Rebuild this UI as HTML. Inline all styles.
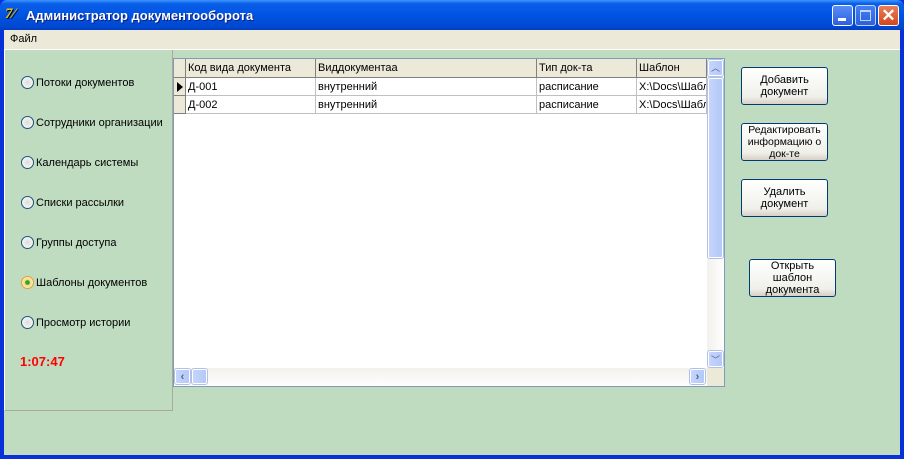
<!DOCTYPE html>
<html><head><meta charset="utf-8"><style>
*{margin:0;padding:0;box-sizing:border-box}
body{width:904px;height:459px;overflow:hidden;background:#0831d9;font-family:Tahoma,"Liberation Sans",sans-serif;font-size:11px;position:relative}
.a{position:absolute}
.title{left:0;top:0;width:904px;height:30px;background:linear-gradient(#3d95ff 0%,#0a5fe8 12%,#0054e3 50%,#0048d0 90%,#003cc0);border-radius:7px 7px 0 0}
.ttext{left:26px;top:8px;color:#fff;font-weight:bold;font-size:13px;text-shadow:1px 1px #0a1e7a}
.menu{left:4px;top:30px;width:896px;height:19px;background:#ece9d8}
.client{left:4px;top:49px;width:896px;height:406px;background:#c0dcc0}
.wb{width:21px;height:21px;top:5px;border:1px solid #fff;border-radius:3px}
.radio{width:13px;height:13px;border-radius:50%;border:1px solid #1c5180;background:radial-gradient(#dcdcd6,#fff);}
.rl{left:36px;color:#000}
.btn{border:1px solid #003c74;border-radius:3px;background:linear-gradient(#fff,#f0f0ea 80%,#d6d0c5);text-align:center;line-height:12px;color:#000;display:flex;align-items:center;justify-content:center}
.hd{top:59px;height:19px;background:#ece9d8;border-right:1px solid #808080;border-bottom:1px solid #808080;padding-left:2px;line-height:18px}
.c{height:18px;border-right:1px solid #c0c0c0;border-bottom:1px solid #c0c0c0;padding-left:2px;line-height:18px;background:#fff;overflow:hidden;white-space:nowrap}
.sb{background:linear-gradient(90deg,#c5d5fc,#b4c8f8);border:1px solid #fff;outline:1px solid #b0c0e8;border-radius:2px}
</style></head><body>
<div class="a title"></div>
<div class="a" style="left:5px;top:6px;width:18px;height:18px;color:#f0c000;font-weight:bold;font-style:italic;font-size:15px;font-family:'Liberation Serif',serif;text-shadow:1px 1px #000">7⁄</div>
<div class="a ttext">Администратор документооборота</div>
<div class="a wb" style="left:832px;background:linear-gradient(#5b8df7,#2c5fe0)"><div class="a" style="left:5px;top:12px;width:8px;height:3px;background:#fff"></div></div>
<div class="a wb" style="left:855px;background:linear-gradient(#5b8df7,#3a68e0);opacity:.75"><div class="a" style="left:4px;top:4px;width:11px;height:11px;border:1px solid #fff;border-top-width:2px"></div></div>
<div class="a wb" style="left:878px;background:linear-gradient(#e8805a,#d3461c);color:#fff;font-size:17px;font-weight:bold;text-align:center;line-height:19px">✕</div>
<div class="a menu"><span class="a" style="left:6px;top:3px">Файл</span></div>
<div class="a client"></div>
<div class="a" style="left:4px;top:49px;width:896px;height:1px;background:#fff"></div>
<div class="a" style="left:4px;top:50px;width:169px;height:361px;border-left:1px solid #fff;border-right:1px solid #aca899;border-bottom:1px solid #aca899"></div>
<div class="a radio" style="left:21px;top:76px"></div><div class="a rl" style="top:77px">Потоки документов</div>
<div class="a radio" style="left:21px;top:116px"></div><div class="a rl" style="top:117px">Сотрудники организации</div>
<div class="a radio" style="left:21px;top:156px"></div><div class="a rl" style="top:157px">Календарь системы</div>
<div class="a radio" style="left:21px;top:196px"></div><div class="a rl" style="top:197px">Списки рассылки</div>
<div class="a radio" style="left:21px;top:236px"></div><div class="a rl" style="top:237px">Группы доступа</div>
<div class="a radio" style="left:21px;top:276px;border-color:#e0a030;background:radial-gradient(#2aa82a 25%,#f7d77a 35%,#fff)"></div><div class="a rl" style="top:277px">Шаблоны документов</div>
<div class="a radio" style="left:21px;top:316px"></div><div class="a rl" style="top:317px">Просмотр истории</div>
<div class="a" style="left:20px;top:354px;color:#f00;font-weight:bold;font-size:13px">1:07:47</div>
<div class="a" style="left:173px;top:58px;width:552px;height:329px;background:#fff;border:1px solid #7f9db9"></div>
<div class="a hd" style="left:174px;width:12px"></div>
<div class="a hd" style="left:186px;width:130px">Код вида документа</div>
<div class="a hd" style="left:316px;width:221px">Виддокументаа</div>
<div class="a hd" style="left:537px;width:100px">Тип док-та</div>
<div class="a hd" style="left:637px;width:70px">Шаблон</div>
<div class="a" style="left:174px;top:78px;width:12px;height:18px;background:#ece9d8;border-right:1px solid #808080;border-bottom:1px solid #808080"><div class="a" style="left:3px;top:4px;border-left:6px solid #000;border-top:5px solid transparent;border-bottom:5px solid transparent"></div></div>
<div class="a" style="left:174px;top:96px;width:12px;height:18px;background:#ece9d8;border-right:1px solid #808080;border-bottom:1px solid #808080"></div>
<div class="a c" style="left:186px;top:78px;width:130px">Д-001</div>
<div class="a c" style="left:316px;top:78px;width:221px">внутренний</div>
<div class="a c" style="left:537px;top:78px;width:100px">расписание</div>
<div class="a c" style="left:637px;top:78px;width:70px">X:\Docs\Шаблон</div>
<div class="a c" style="left:186px;top:96px;width:130px">Д-002</div>
<div class="a c" style="left:316px;top:96px;width:221px">внутренний</div>
<div class="a c" style="left:537px;top:96px;width:100px">расписание</div>
<div class="a c" style="left:637px;top:96px;width:70px">X:\Docs\Шаблон</div>
<div class="a" style="left:707px;top:59px;width:17px;height:309px;background:linear-gradient(90deg,#f3f1ec,#fefefe)"></div>
<div class="a sb" style="left:708px;top:60px;width:15px;height:16px;color:#4d6185;font-size:9px;text-align:center;line-height:14px">︿</div>
<div class="a sb" style="left:708px;top:78px;width:15px;height:180px"></div>
<div class="a sb" style="left:708px;top:351px;width:15px;height:16px;color:#4d6185;font-size:9px;text-align:center;line-height:16px">﹀</div>
<div class="a" style="left:174px;top:368px;width:533px;height:18px;background:linear-gradient(#f3f1ec,#fefefe)"></div>
<div class="a sb" style="left:175px;top:369px;width:15px;height:15px;color:#4d6185;font-weight:bold;text-align:center;line-height:14px">‹</div>
<div class="a sb" style="left:192px;top:369px;width:15px;height:15px"></div>
<div class="a sb" style="left:690px;top:369px;width:15px;height:15px;color:#4d6185;font-weight:bold;text-align:center;line-height:14px">›</div>
<div class="a" style="left:707px;top:368px;width:17px;height:18px;background:#ece9d8"></div>
<div class="a btn" style="left:741px;top:67px;width:87px;height:38px">Добавить<br>документ</div>
<div class="a btn" style="left:741px;top:123px;width:87px;height:38px;font-size:10.5px">Редактировать<br>информацию о<br>док-те</div>
<div class="a btn" style="left:741px;top:179px;width:87px;height:38px">Удалить<br>документ</div>
<div class="a btn" style="left:749px;top:259px;width:87px;height:38px">Открыть<br>шаблон<br>документа</div>
</body></html>
